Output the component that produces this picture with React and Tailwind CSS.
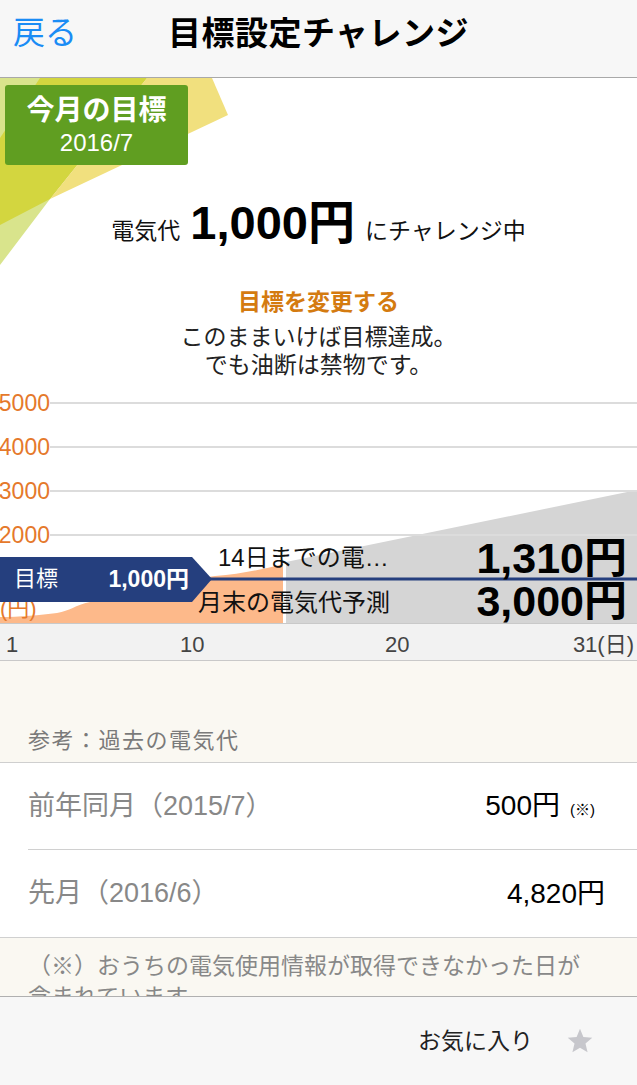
export default function App() {
  return (
    <div className="w-[637px] h-[1085px] flex flex-col overflow-hidden bg-white font-['Liberation_Sans','Noto_Sans_CJK_JP',sans-serif] text-[#111]">
      <header className="h-[78px] shrink-0 bg-[#f7f7f7] border-b border-[#a9a9a9] grid grid-cols-[1fr_auto_1fr] items-center pb-[11px]">
        <span className="pl-[13px] text-[32px] leading-none text-[#1a8cf5]">戻る</span>
        <h1 className="text-[33px] font-bold leading-none text-black tracking-[0.5px]">目標設定チャレンジ</h1>
        <span />
      </header>

      <main className="flex-1 overflow-hidden flex flex-col">
        {/* top section */}
        <section className="relative h-[312px] shrink-0 overflow-hidden">
          <svg className="absolute left-0 top-0" width="240" height="200" viewBox="0 0 240 200">
            <polygon points="0,0 147,0 50,121 0,187" fill="#d9e48c" />
            <polygon points="40,0 147,0 50,121 0,147 0,60" fill="#d3d63f" />
            <polygon points="147,0 212,0 228,37 50,121" fill="#f1e07e" />
          </svg>
          <div className="relative flex flex-col">
            <div className="ml-[5px] mt-[7px] w-[183px] h-[80px] rounded-[3px] bg-[#609e21] flex flex-col items-center justify-center text-white">
              <div className="text-[28px] font-bold leading-[34px]">今月の目標</div>
              <div className="text-[24px] leading-[28px] mt-[1px]">2016/7</div>
            </div>
            <div className="mt-[30px] h-[56px] flex items-baseline justify-center">
              <span className="text-[23px]">電気代</span>
              <span className="text-[47px] font-bold mx-[10px] leading-[56px] text-black">1,000円</span>
              <span className="text-[23px]">にチャレンジ中</span>
            </div>
            <div className="mt-[37px] text-center text-[23px] font-bold leading-[28px] text-[#d47b10]">目標を変更する</div>
            <div className="mt-[7px] text-center text-[23px] leading-[28px] text-[#222]">
              <div>このままいけば目標達成。</div>
              <div>でも油断は禁物です。</div>
            </div>
          </div>
        </section>

        {/* chart */}
        <section className="relative h-[234px] shrink-0 border-b border-[#c9c9c9] overflow-hidden">
          <svg className="absolute left-0 top-0" width="637" height="233" viewBox="0 0 637 233">
            <path d="M0,227 C20,227 40,225 57,223 C70,221 75,215 90,212 C120,206 150,200 190,194 C200,190 205,187 215,186 C240,184 260,180 283,174 L283,233 L0,233 Z" fill="#fdb98a" />
            <polygon points="286,172 637,100 637,233 286,233" fill="#d5d5d5" />
            <rect x="50" y="12" width="587" height="2" fill="#dcdcdc" />
            <rect x="50" y="56" width="587" height="2" fill="#dcdcdc" />
            <rect x="50" y="100" width="587" height="2" fill="#dcdcdc" />
            <rect x="50" y="144" width="587" height="2" fill="#dcdcdc" />
          </svg>
          <span className="absolute right-[587px] top-[1px] text-[23px] leading-[24px] text-[#e5792b]">5000</span>
          <span className="absolute right-[587px] top-[45px] text-[23px] leading-[24px] text-[#e5792b]">4000</span>
          <span className="absolute right-[587px] top-[89px] text-[23px] leading-[24px] text-[#e5792b]">3000</span>
          <span className="absolute right-[587px] top-[133px] text-[23px] leading-[24px] text-[#e5792b]">2000</span>
          <span className="absolute left-0 top-[207px] text-[22px] leading-[24px] text-[#e5792b]">(円)</span>
          <svg className="absolute left-0 top-0" width="637" height="233" viewBox="0 0 637 233">
            <polygon points="0,167 192,167 212,189 192,212 0,212" fill="#253f7e" />
            <rect x="210" y="187.5" width="427" height="3" fill="#253f7e" />
          </svg>
          <span className="absolute left-[14px] top-[176px] text-[22px] leading-[26px] text-white">目標</span>
          <span className="absolute right-[448px] top-[176px] text-[23px] leading-[26px] font-bold text-white">1,000円</span>
          <span className="absolute left-[218px] top-[154px] text-[24px] leading-[28px] text-[#111]">14日までの電…</span>
          <span className="absolute left-[198px] top-[199px] text-[24px] leading-[28px] text-[#111]">月末の電気代予測</span>
          <span className="absolute right-[10px] top-[148px] text-[43px] leading-[40px] font-bold text-black">1,310円</span>
          <span className="absolute right-[10px] top-[191px] text-[43px] leading-[40px] font-bold text-black">3,000円</span>
        </section>

        {/* axis */}
        <section className="relative h-[37px] shrink-0 bg-[#f2f2f2] border-b border-[#c9c9c9] text-[22px] leading-[26px] text-[#444]">
          <span className="absolute left-[6px] top-[8px]">1</span>
          <span className="absolute left-[180px] top-[8px]">10</span>
          <span className="absolute left-[385px] top-[8px]">20</span>
          <span className="absolute right-[3px] top-[8px]">31(日)</span>
        </section>

        {/* reference */}
        <section className="h-[102px] shrink-0 bg-[#faf8f2] border-b border-[#cfcfcf] flex items-end px-[28px] pb-[9px]">
          <span className="text-[22px] leading-[24px] tracking-[1.5px] text-[#7a7a7a]">参考：過去の電気代</span>
        </section>

        <div className="shrink-0 pl-[28px]">
          <div className="h-[87px] flex items-center justify-between pr-[42px] border-b border-[#d0d0d0]">
            <span className="text-[27px] text-[#888]">前年同月（2015/7）</span>
            <span className="flex items-baseline">
              <span className="text-[28px] text-black">500円</span>
              <span className="ml-[10px] text-[15px] text-black">(※)</span>
            </span>
          </div>
        </div>
        <div className="shrink-0 h-[88px] pl-[28px] pr-[32px] flex items-center justify-between border-b border-[#d0d0d0]">
          <span className="text-[27px] text-[#888]">先月（2016/6）</span>
          <span className="text-[28px] text-black">4,820円</span>
        </div>

        <section className="flex-1 bg-[#faf8f2] px-[28px] pt-[13px]">
          <p className="text-[23px] leading-[31px] text-[#888]">
            （※）おうちの電気使用情報が取得できなかった日が
            <br />
            含まれています。
          </p>
        </section>
      </main>

      <footer className="h-[89px] shrink-0 bg-[#f7f7f7] border-t border-[#b0b0b0] flex items-center justify-end pr-[43px] gap-[33px]">
        <span className="text-[23px] text-[#222]">お気に入り</span>
        <svg width="28" height="28" viewBox="0 0 24 24">
          <polygon points="12,1.5 14.9,8.6 22.5,9.2 16.7,14.2 18.5,21.7 12,17.7 5.5,21.7 7.3,14.2 1.5,9.2 9.1,8.6" fill="#c7c7cc" />
        </svg>
      </footer>
    </div>
  );
}
